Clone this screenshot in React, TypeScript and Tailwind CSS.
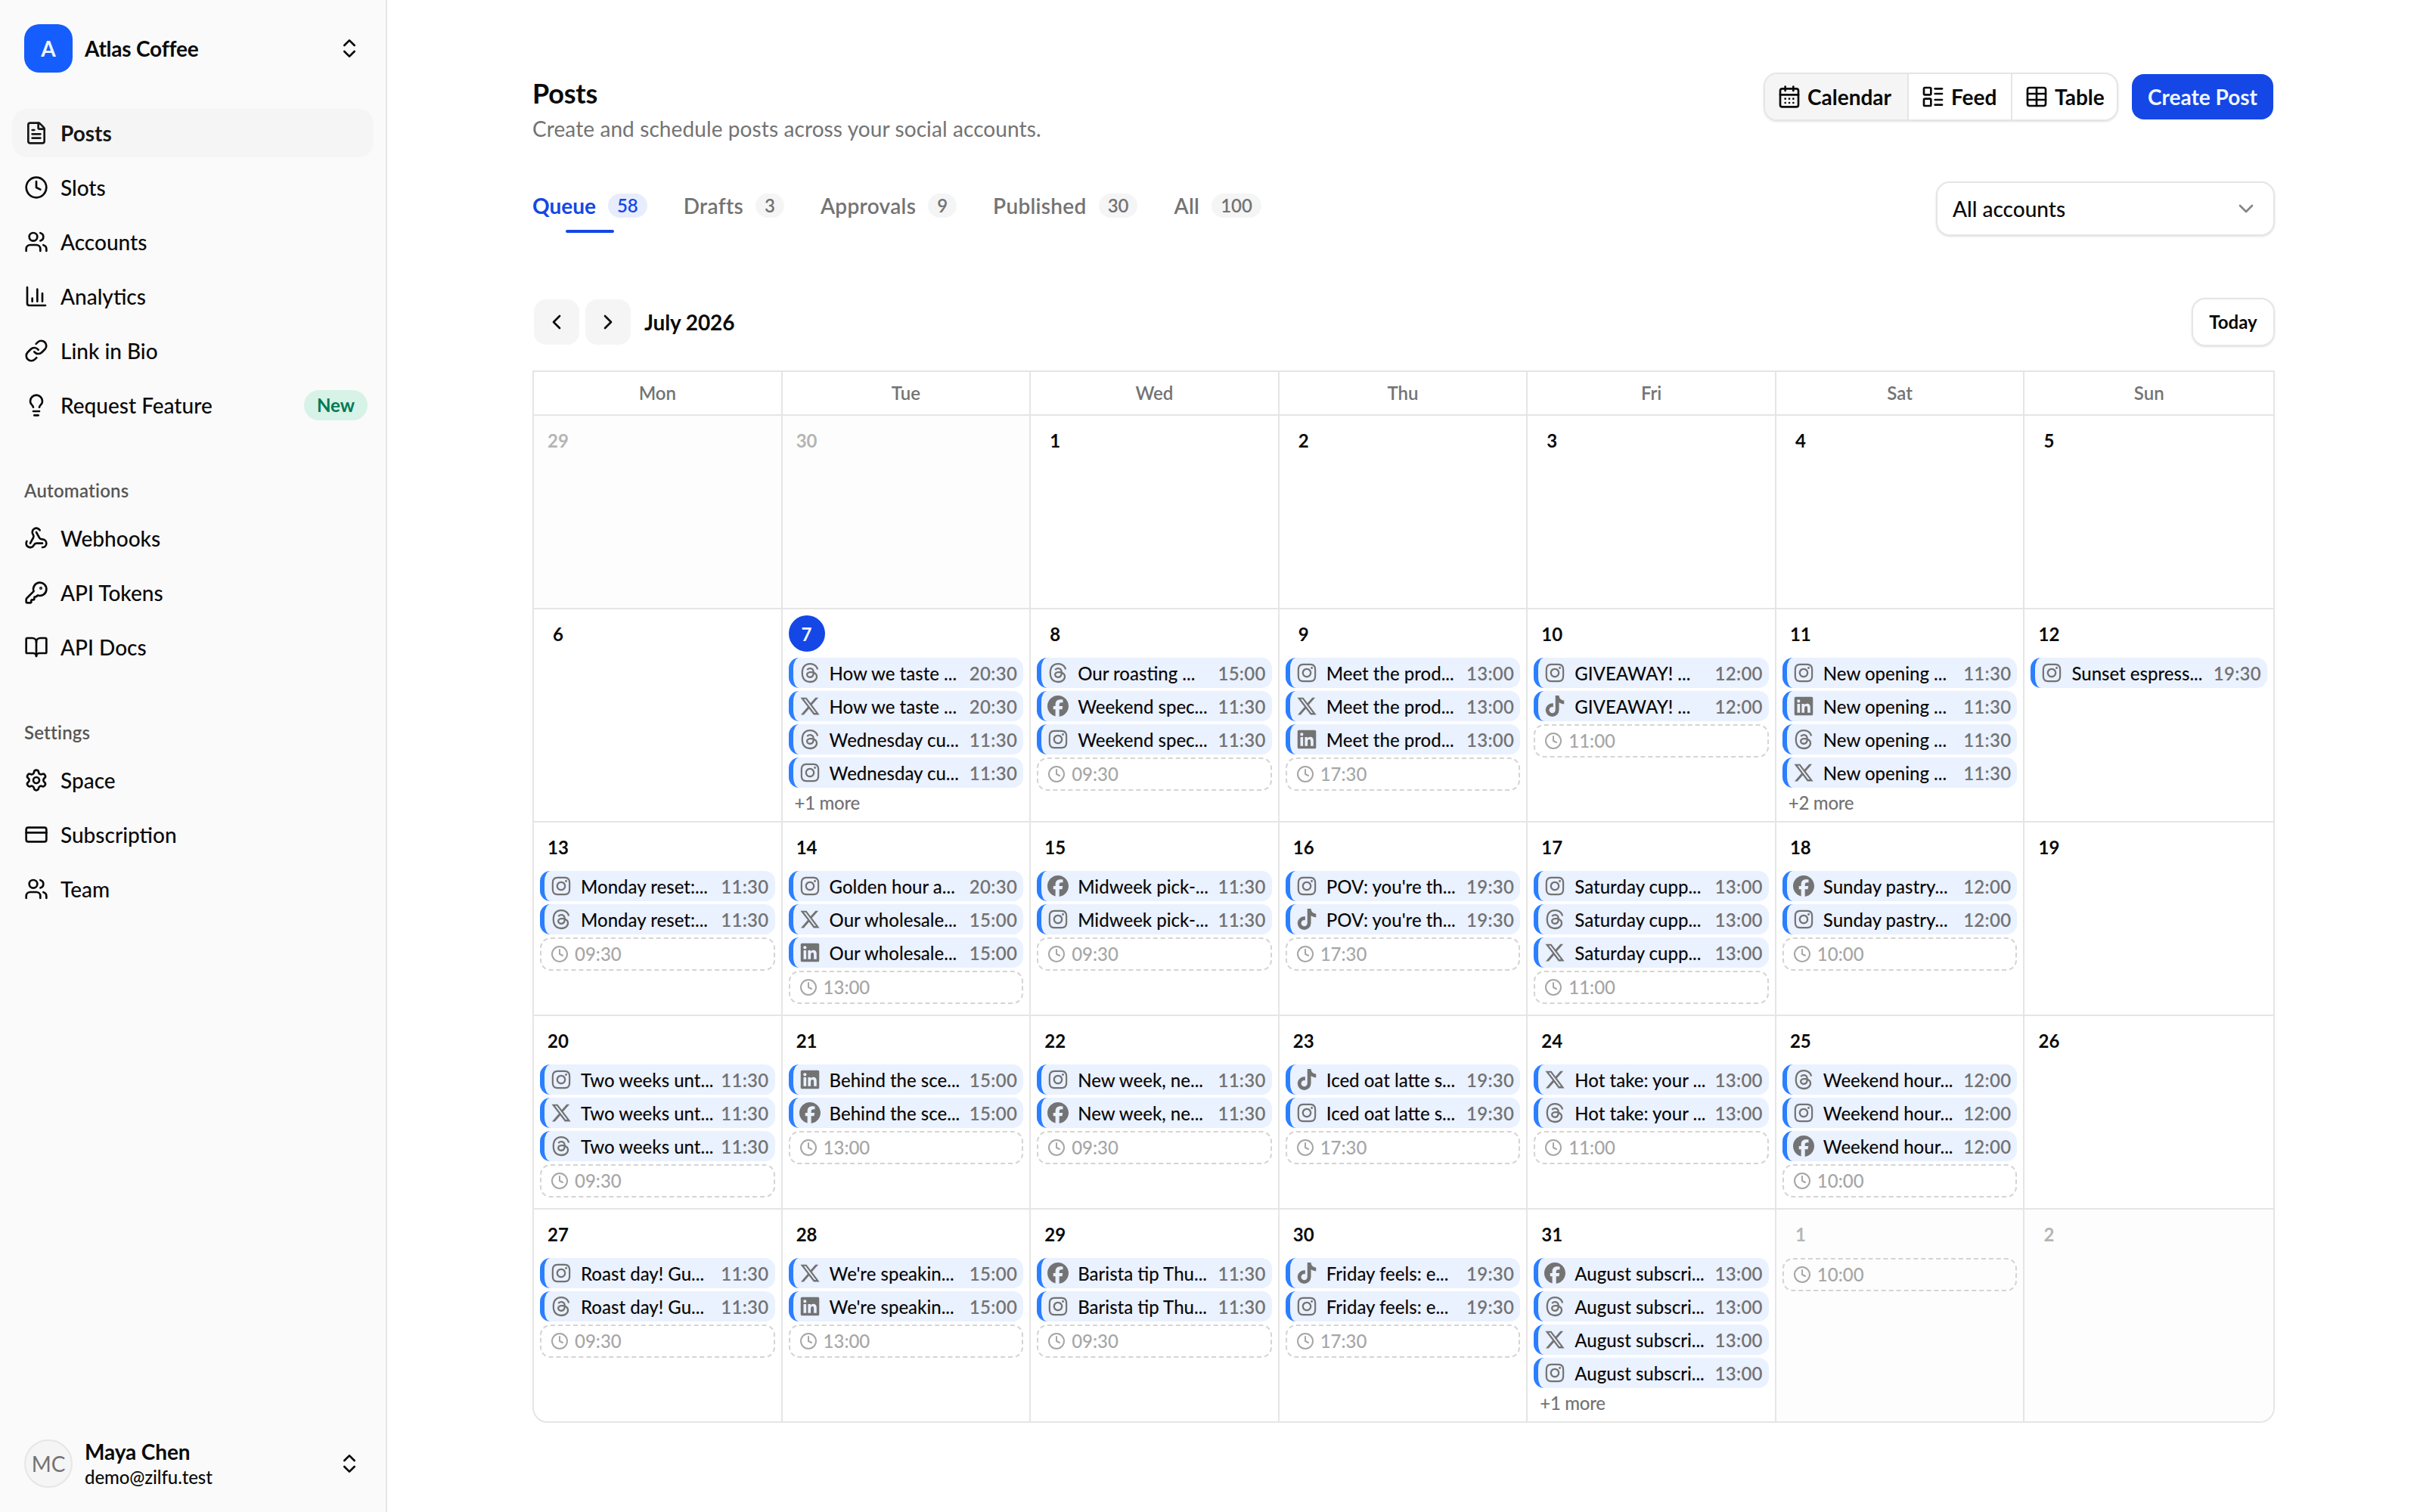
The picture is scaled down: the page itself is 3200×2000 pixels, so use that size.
import type { ComponentType } from "react";
import {
  BookOpen, CalendarDays, ChartColumn, ChevronDown, ChevronLeft, ChevronRight, ChevronsUpDown, Clock,
  CreditCard, FileText, KeyRound, LayoutList, Lightbulb, Link, Settings, Table, Users, Webhook,
} from "lucide-react";
import { FaFacebook, FaInstagram, FaLinkedin, FaThreads, FaTiktok, FaXTwitter } from "react-icons/fa6";

type IconType = ComponentType<{ className?: string; strokeWidth?: number }>;
type NavItem = { label: string; icon: IconType; active?: boolean; badge?: string };
type Post = [network: keyof typeof NETWORKS, title: string, time: string];
type Day = { n: number; posts?: Post[]; slot?: string; more?: number; outside?: boolean; today?: boolean };

const NETWORKS = {
  ig: FaInstagram,
  th: FaThreads,
  x: FaXTwitter,
  li: FaLinkedin,
  fb: FaFacebook,
  tt: FaTiktok,
};

const NAV: { title?: string; items: NavItem[] }[] = [
  {
    items: [
      { label: "Posts", icon: FileText, active: true },
      { label: "Slots", icon: Clock },
      { label: "Accounts", icon: Users },
      { label: "Analytics", icon: ChartColumn },
      { label: "Link in Bio", icon: Link },
      { label: "Request Feature", icon: Lightbulb, badge: "New" },
    ],
  },
  {
    title: "Automations",
    items: [
      { label: "Webhooks", icon: Webhook },
      { label: "API Tokens", icon: KeyRound },
      { label: "API Docs", icon: BookOpen },
    ],
  },
  {
    title: "Settings",
    items: [
      { label: "Space", icon: Settings },
      { label: "Subscription", icon: CreditCard },
      { label: "Team", icon: Users },
    ],
  },
];

const TABS = [
  { label: "Queue", count: 58, active: true },
  { label: "Drafts", count: 3 },
  { label: "Approvals", count: 9 },
  { label: "Published", count: 30 },
  { label: "All", count: 100 },
];

const WEEKDAYS = ["Mon", "Tue", "Wed", "Thu", "Fri", "Sat", "Sun"];

const WEEKS: Day[][] = [
  [{ n: 29, outside: true }, { n: 30, outside: true }, { n: 1 }, { n: 2 }, { n: 3 }, { n: 4 }, { n: 5 }],
  [
    { n: 6 },
    {
      n: 7, today: true, more: 1,
      posts: [
        ["th", "How we taste ...", "20:30"],
        ["x", "How we taste ...", "20:30"],
        ["th", "Wednesday cu...", "11:30"],
        ["ig", "Wednesday cu...", "11:30"],
      ],
    },
    { n: 8, slot: "09:30", posts: [["th", "Our roasting ...", "15:00"], ["fb", "Weekend spec...", "11:30"], ["ig", "Weekend spec...", "11:30"]] },
    { n: 9, slot: "17:30", posts: [["ig", "Meet the prod...", "13:00"], ["x", "Meet the prod...", "13:00"], ["li", "Meet the prod...", "13:00"]] },
    { n: 10, slot: "11:00", posts: [["ig", "GIVEAWAY! ...", "12:00"], ["tt", "GIVEAWAY! ...", "12:00"]] },
    {
      n: 11, more: 2,
      posts: [
        ["ig", "New opening ...", "11:30"],
        ["li", "New opening ...", "11:30"],
        ["th", "New opening ...", "11:30"],
        ["x", "New opening ...", "11:30"],
      ],
    },
    { n: 12, posts: [["ig", "Sunset espress...", "19:30"]] },
  ],
  [
    { n: 13, slot: "09:30", posts: [["ig", "Monday reset:...", "11:30"], ["th", "Monday reset:...", "11:30"]] },
    { n: 14, slot: "13:00", posts: [["ig", "Golden hour a...", "20:30"], ["x", "Our wholesale...", "15:00"], ["li", "Our wholesale...", "15:00"]] },
    { n: 15, slot: "09:30", posts: [["fb", "Midweek pick-...", "11:30"], ["ig", "Midweek pick-...", "11:30"]] },
    { n: 16, slot: "17:30", posts: [["ig", "POV: you're th...", "19:30"], ["tt", "POV: you're th...", "19:30"]] },
    { n: 17, slot: "11:00", posts: [["ig", "Saturday cupp...", "13:00"], ["th", "Saturday cupp...", "13:00"], ["x", "Saturday cupp...", "13:00"]] },
    { n: 18, slot: "10:00", posts: [["fb", "Sunday pastry...", "12:00"], ["ig", "Sunday pastry...", "12:00"]] },
    { n: 19 },
  ],
  [
    { n: 20, slot: "09:30", posts: [["ig", "Two weeks unt...", "11:30"], ["x", "Two weeks unt...", "11:30"], ["th", "Two weeks unt...", "11:30"]] },
    { n: 21, slot: "13:00", posts: [["li", "Behind the sce...", "15:00"], ["fb", "Behind the sce...", "15:00"]] },
    { n: 22, slot: "09:30", posts: [["ig", "New week, ne...", "11:30"], ["fb", "New week, ne...", "11:30"]] },
    { n: 23, slot: "17:30", posts: [["tt", "Iced oat latte s...", "19:30"], ["ig", "Iced oat latte s...", "19:30"]] },
    { n: 24, slot: "11:00", posts: [["x", "Hot take: your ...", "13:00"], ["th", "Hot take: your ...", "13:00"]] },
    { n: 25, slot: "10:00", posts: [["th", "Weekend hour...", "12:00"], ["ig", "Weekend hour...", "12:00"], ["fb", "Weekend hour...", "12:00"]] },
    { n: 26 },
  ],
  [
    { n: 27, slot: "09:30", posts: [["ig", "Roast day! Gu...", "11:30"], ["th", "Roast day! Gu...", "11:30"]] },
    { n: 28, slot: "13:00", posts: [["x", "We're speakin...", "15:00"], ["li", "We're speakin...", "15:00"]] },
    { n: 29, slot: "09:30", posts: [["fb", "Barista tip Thu...", "11:30"], ["ig", "Barista tip Thu...", "11:30"]] },
    { n: 30, slot: "17:30", posts: [["tt", "Friday feels: e...", "19:30"], ["ig", "Friday feels: e...", "19:30"]] },
    {
      n: 31, more: 1,
      posts: [
        ["fb", "August subscri...", "13:00"],
        ["th", "August subscri...", "13:00"],
        ["x", "August subscri...", "13:00"],
        ["ig", "August subscri...", "13:00"],
      ],
    },
    { n: 1, outside: true, slot: "10:00" },
    { n: 2, outside: true },
  ],
];

export default function App() {
  return (
    <div className="flex h-[2000px] w-[3200px] overflow-hidden bg-white font-[Lato,sans-serif] text-[28px] leading-[40px] text-[#0a0a0a]">
      <Sidebar />
      <main className="flex flex-1 flex-col pl-48 pr-48 pt-24">
        <PageHeader />
        <Toolbar />
        <MonthBar />
        <MonthGrid />
      </main>
    </div>
  );
}

function Sidebar() {
  return (
    <aside className="flex w-[512px] shrink-0 flex-col border-r-2 border-[#e5e5e5] bg-[#fafafa]">
      <div className="mt-8 flex h-16 items-center gap-4 pl-8 pr-8">
        <div className="grid size-16 place-items-center rounded-[20px] bg-[#155dfc] font-bold text-[#eff6ff]">A</div>
        <span className="flex-1 font-bold tracking-[-0.2px]">Atlas Coffee</span>
        <ChevronsUpDown className="size-8" strokeWidth={2} />
      </div>

      <nav className="mt-12 flex flex-col gap-12 px-4">
        {NAV.map((group, i) => (
          <div key={i}>
            {group.title && (
              <div className="flex h-16 items-center px-4 pt-0.5 text-2xl font-semibold tracking-[0.2px] text-[#575757]">{group.title}</div>
            )}
            <ul className="flex flex-col gap-2">
              {group.items.map((item) => (
                <NavLink key={item.label} item={item} />
              ))}
            </ul>
          </div>
        ))}
      </nav>

      <div className="mt-auto mb-8 flex h-16 items-center gap-4 px-8">
        <div className="grid size-16 place-items-center rounded-full border-2 border-[#e6e6e6] bg-[#f5f5f5] text-[#737373]">MC</div>
        <div className="flex-1">
          <div className="leading-[35px] font-bold tracking-[-0.1px]">Maya Chen</div>
          <div className="text-2xl leading-8 font-medium tracking-[-0.1px]">demo@zilfu.test</div>
        </div>
        <ChevronsUpDown className="size-8" strokeWidth={2} />
      </div>
    </aside>
  );
}

function NavLink({ item }: { item: NavItem }) {
  const Icon = item.icon;
  return (
    <li className={`flex h-16 items-center gap-4 rounded-[20px] px-4 ${item.active ? "bg-[#f5f5f5] font-bold text-[#171717]" : "font-medium"}`}>
      <Icon className="size-8" strokeWidth={2} />
      <span className="flex-1">{item.label}</span>
      {item.badge && (
        <span className="-mr-2 grid h-10 w-[84px] place-items-center rounded-full bg-[#d7f2e7] text-2xl font-bold text-[#007a55]">
          {item.badge}
        </span>
      )}
    </li>
  );
}

function PageHeader() {
  return (
    <header className="flex items-start justify-between">
      <div>
        <h1 className="text-4xl leading-[54px] font-bold tracking-[-0.2px]">Posts</h1>
        <p className="text-[#737373] tracking-[0.1px]">Create and schedule posts across your social accounts.</p>
      </div>
      <div className="flex gap-4">
        <div className="flex h-16 w-[469px] overflow-hidden rounded-[18px] border-2 border-[#e5e5e5] font-bold shadow-sm">
          <div className="flex w-[188px] items-center gap-2 bg-[#f5f5f5] pl-4"><CalendarDays className="size-8" />Calendar</div>
          <div className="flex w-[137px] items-center gap-2 border-l-2 border-[#e5e5e5] pl-4"><LayoutList className="size-8" />Feed</div>
          <div className="flex flex-1 items-center gap-2 border-l-2 border-[#e5e5e5] pl-4"><Table className="size-8" />Table</div>
        </div>
        <button className="h-16 w-[191px] rounded-[18px] border-2 border-transparent bg-[#1447e6] bg-clip-padding text-center font-bold text-[#eff6ff]">
          Create Post
        </button>
      </div>
    </header>
  );
}

function Toolbar() {
  return (
    <div className="mt-[50px] flex items-start justify-between">
      <div className="flex gap-12">
        {TABS.map((tab) => (
          <div key={tab.label} className={`flex flex-col items-center ${tab.active ? "font-bold text-[#1447e6]" : "font-semibold tracking-[0.3px] text-[#737373]"}`}>
            <div className="mt-3 flex h-10 items-center gap-4">
              {tab.label}
              <span className={`grid h-8 min-w-[37px] place-items-center rounded-full px-3 text-2xl leading-8 font-semibold tracking-normal ${tab.active ? "bg-[#e8edfd]" : "bg-[#f5f5f5]"}`}>
                {tab.count}
              </span>
            </div>
            {tab.active && <div className="mt-3 h-1 w-16 rounded-full bg-[#1447e6]" />}
          </div>
        ))}
      </div>
      <div className="flex h-[72px] w-[448px] items-center justify-between rounded-[18px] border-2 border-[#e5e5e5] pl-5 pr-5 font-medium shadow-sm">
        All accounts
        <ChevronDown className="size-8 text-[#858585]" />
      </div>
    </div>
  );
}

function MonthBar() {
  return (
    <div className="mt-[82px] flex h-16 items-center gap-2">
      <button className="ml-0.5 grid size-[60px] place-items-center rounded-2xl bg-[#f5f5f5]"><ChevronLeft className="size-8" /></button>
      <button className="grid size-[60px] place-items-center rounded-2xl bg-[#f5f5f5]"><ChevronRight className="size-8" /></button>
      <span className="ml-2.5 flex-1 font-bold tracking-[-0.1px]">July 2026</span>
      <button className="h-16 w-[110px] rounded-[18px] border-2 border-[#e5e5e5] text-2xl font-bold shadow-sm">Today</button>
    </div>
  );
}

function MonthGrid() {
  return (
    <section className="mt-8 overflow-hidden rounded-b-[20px] border-2 border-[#e5e5e5]">
      <div className="grid h-[58px] grid-cols-7 border-b-2 border-[#e5e5e5]">
        {WEEKDAYS.map((d) => (
          <div key={d} className="grid place-items-center border-r-2 border-[#e5e5e5] text-2xl font-semibold text-[#737373] last:border-r-0">{d}</div>
        ))}
      </div>
      {WEEKS.map((week, i) => (
        <div key={i} className="grid grid-cols-7 border-b-2 border-[#e5e5e5] last:border-b-0">
          {week.map((day) => (
            <DayCell key={day.n} day={day} />
          ))}
        </div>
      ))}
    </section>
  );
}

function DayCell({ day }: { day: Day }) {
  const color = day.today ? "bg-[#1447e6] text-[#eff6ff]" : day.outside ? "text-[#b5b5b5]" : "";
  return (
    <div className={`min-h-[254px] min-w-0 border-r-2 border-[#e5e5e5] p-2 last:border-r-0 ${day.outside ? "bg-[#fdfdfd]" : ""}`}>
      <div className={`mb-2 grid size-12 place-items-center rounded-full pt-px text-2xl font-bold ${color}`}>{day.n}</div>
      <div className="flex flex-col gap-1">
        {day.posts?.map((post, i) => (
          <PostChip key={i} post={post} />
        ))}
        {day.slot && (
          <div className="flex h-11 items-center gap-2 rounded-[14px] border-2 border-dashed border-[#d4d4d4] pl-3 text-2xl font-medium text-[#a6a6a6]">
            <Clock className="size-6" />
            {day.slot}
          </div>
        )}
        {day.more && <div className="px-2 text-2xl leading-8 font-medium tracking-[-0.3px] text-[#737373]">+{day.more} more</div>}
      </div>
    </div>
  );
}

function PostChip({ post: [network, title, time] }: { post: Post }) {
  const Icon = NETWORKS[network];
  return (
    <div className="flex h-10 items-center gap-3 rounded-[14px] border-l-[6px] border-[#2b7fff] bg-[#eaf1ff] px-2 text-2xl">
      <Icon className="size-7 shrink-0 text-[#737373]" />
      <span className="min-w-0 flex-1 pt-px font-medium whitespace-nowrap">{title}</span>
      <span className="pt-px font-semibold tracking-[0.3px] tabular-nums text-[#737373]">{time}</span>
    </div>
  );
}
